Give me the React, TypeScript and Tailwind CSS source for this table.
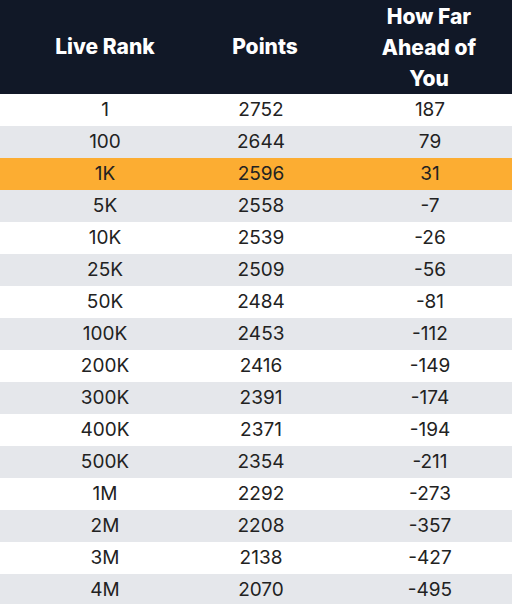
const rows: [string, string, string][] = [
  ['1', '2752', '187'],
  ['100', '2644', '79'],
  ['1K', '2596', '31'],
  ['5K', '2558', '-7'],
  ['10K', '2539', '-26'],
  ['25K', '2509', '-56'],
  ['50K', '2484', '-81'],
  ['100K', '2453', '-112'],
  ['200K', '2416', '-149'],
  ['300K', '2391', '-174'],
  ['400K', '2371', '-194'],
  ['500K', '2354', '-211'],
  ['1M', '2292', '-273'],
  ['2M', '2208', '-357'],
  ['3M', '2138', '-427'],
  ['4M', '2070', '-495'],
];

const HIGHLIGHT = 2;

export default function App() {
  return (
    <div className="w-[512px] bg-white font-['Inter',sans-serif] text-[19px]">
      {/* header */}
      <div className="grid h-[94px] grid-cols-[210px_102px_1fr] items-center bg-[#111827] text-[21px] font-extrabold text-white">
        <div className="text-center">Live Rank</div>
        <div className="pl-2 text-center">Points</div>
        <div className="pl-[34px] text-center leading-[31px]">
          How Far
          <br />
          Ahead of
          <br />
          You
        </div>
      </div>

      {/* rows */}
      {rows.map(([rank, pts, diff], i) => (
        <div
          key={rank}
          className={`grid h-[32px] grid-cols-[210px_102px_1fr] items-center text-[#222222] ${
            i === HIGHLIGHT ? 'bg-[#fcad32]' : i % 2 === 1 ? 'bg-[#e5e7eb]' : 'bg-white'
          }`}
        >
          <div className="text-center">{rank}</div>
          <div className="text-center">{pts}</div>
          <div className="pl-[36px] text-center">{diff}</div>
        </div>
      ))}
    </div>
  );
}
